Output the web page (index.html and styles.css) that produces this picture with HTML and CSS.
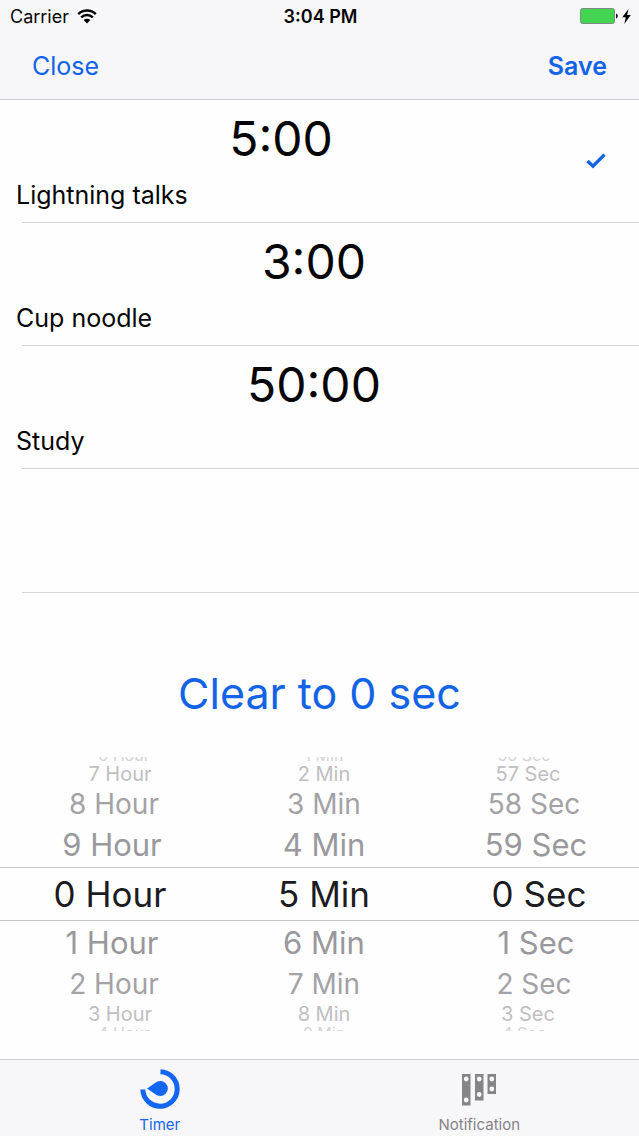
FILE: index.html
```html
<!DOCTYPE html>
<html lang="en">
<head>
<meta charset="utf-8">
<meta name="viewport" content="width=device-width, initial-scale=1">
<title>Timer</title>
<link rel="stylesheet" href="styles.css">
</head>
<body>
<header class="header">
  <div class="status">
    <div class="status-side">
      <span>Carrier</span>
      <svg class="wifi" viewBox="0 0 20 15" aria-hidden="true">
        <path d="M1.2 5.2a12.6 12.6 0 0 1 17.6 0M4.2 8.3a8.3 8.3 0 0 1 11.6 0" fill="none" stroke="currentColor" stroke-width="2.5"/>
        <path d="M6.6 11a4.9 4.9 0 0 1 6.8 0L10 14.4z" fill="currentColor"/>
      </svg>
    </div>
    <time class="clock">3:04 PM</time>
    <div class="status-side status-end">
      <svg class="battery" viewBox="0 0 38 16" aria-hidden="true">
        <rect x=".5" y=".5" width="34" height="15" rx="2" fill="#43d551" stroke="#7d8a80"/>
        <path d="M36 5.5q1.8.6 1.8 2.5T36 10.5z" fill="#111"/>
      </svg>
      <svg class="bolt" viewBox="0 0 9 15" aria-hidden="true">
        <path d="M6.5 0 .3 8.3h3.5L2.3 15 8.8 6H5.2z" fill="#000"/>
      </svg>
    </div>
  </div>
  <nav class="nav">
    <button class="nav-button" type="button">Close</button>
    <button class="nav-button nav-save" type="button">Save</button>
  </nav>
</header>
<main class="main">
  <ul class="presets">
    <li class="preset preset-selected">
      <div class="preset-text"><span class="preset-time">5:00</span><span class="preset-name">Lightning talks</span></div>
      <svg class="check" viewBox="0 0 20 16" role="img" aria-label="Selected"><path d="M1.5 8 7 13.2 18.5 1.6" fill="none" stroke="currentColor" stroke-width="3.4"/></svg>
    </li>
    <li class="preset"><div class="preset-text"><span class="preset-time">3:00</span><span class="preset-name">Cup noodle</span></div></li>
    <li class="preset"><div class="preset-text"><span class="preset-time">50:00</span><span class="preset-name">Study</span></div></li>
    <li class="preset"></li>
  </ul>
  <button class="clear" type="button">Clear to 0 sec</button>
  <div class="picker">
    <ul class="wheel wheel-hour" role="listbox" aria-label="Hours">
      <li class="far above" role="option">6 Hour</li>
      <li class="third" role="option">7 Hour</li>
      <li class="second" role="option">8 Hour</li>
      <li class="first" role="option">9 Hour</li>
      <li class="current" role="option" aria-selected="true">0 Hour</li>
      <li class="first" role="option">1 Hour</li>
      <li class="second" role="option">2 Hour</li>
      <li class="third" role="option">3 Hour</li>
      <li class="far" role="option">4 Hour</li>
    </ul>
    <ul class="wheel" role="listbox" aria-label="Minutes">
      <li class="far above" role="option">1 Min</li>
      <li class="third" role="option">2 Min</li>
      <li class="second" role="option">3 Min</li>
      <li class="first" role="option">4 Min</li>
      <li class="current" role="option" aria-selected="true">5 Min</li>
      <li class="first" role="option">6 Min</li>
      <li class="second" role="option">7 Min</li>
      <li class="third" role="option">8 Min</li>
      <li class="far" role="option">9 Min</li>
    </ul>
    <ul class="wheel wheel-sec" role="listbox" aria-label="Seconds">
      <li class="far above" role="option">56 Sec</li>
      <li class="third" role="option">57 Sec</li>
      <li class="second" role="option">58 Sec</li>
      <li class="first" role="option">59 Sec</li>
      <li class="current" role="option" aria-selected="true">0 Sec</li>
      <li class="first" role="option">1 Sec</li>
      <li class="second" role="option">2 Sec</li>
      <li class="third" role="option">3 Sec</li>
      <li class="far" role="option">4 Sec</li>
    </ul>
  </div>
</main>
<nav class="tabs">
  <button class="tab tab-active" type="button">
    <svg class="tab-icon" viewBox="0 0 40 40" aria-hidden="true">
      <path d="M20.5 2.8A17.2 17.2 0 1 1 2.8 20.5" fill="none" stroke="currentColor" stroke-width="5"/>
      <path d="M7 19.500 15 14A7.600 7.600 0 1 1 15 25z" fill="currentColor"/>
    </svg>
    <span>Timer</span>
  </button>
  <button class="tab" type="button">
    <svg class="tab-icon" viewBox="0 0 40 40" aria-hidden="true">
      <path d="M3 5h8.5v31.5H3zM16 5h8.500v26.500H16zM28.500 5H37v20h-8.500z" fill="currentColor"/>
      <g fill="#f7f6f9"><circle cx="7.200" cy="10" r="2.400"/><circle cx="7.200" cy="31" r="2.400"/><circle cx="20.200" cy="10" r="2.400"/><circle cx="20.200" cy="25.500" r="2.400"/><circle cx="32.800" cy="10" r="2.400"/><circle cx="32.800" cy="20" r="2.400"/></g>
    </svg>
    <span>Notification</span>
  </button>
</nav>
</body>
</html>
```
FILE: styles.css
```css
* { box-sizing: border-box; }
body {
  margin: 0;
  min-height: 100vh;
  display: flex;
  flex-direction: column;
  background: #fefefe;
  color: #050505;
  font-family: Inter, "Liberation Sans", sans-serif;
}
button {
  border: 0;
  padding: 0;
  background: none;
  color: #1263e6;
  font: inherit;
  cursor: pointer;
}
ul { margin: 0; padding: 0; list-style: none; }
svg { display: block; flex: none; }

.header { background: #f7f6f9; border-bottom: 1px solid #cbcacd; }
.status {
  display: grid;
  grid-template-columns: 1fr auto 1fr;
  align-items: center;
  height: 32px;
  padding: 0 8px 0 10px;
  font-size: 18px;
}
.status-side { display: flex; align-items: center; gap: 8px; }
.status-end { justify-content: flex-end; gap: 4px; }
.clock { font-weight: 600; }
.wifi { width: 20px; height: 15px; }
.battery { width: 38px; height: 16px; }
.bolt { width: 9px; height: 15px; }
.nav {
  display: flex;
  justify-content: space-between;
  align-items: center;
  height: 67px;
  padding: 0 32px;
}
.nav-button { font-size: 25px; line-height: 32px; }
.nav-save { font-weight: 600; }

.main { flex: 1; display: flex; flex-direction: column; }
.presets { padding-left: 22px; }
.preset {
  display: flex;
  align-items: center;
  gap: 40px;
  min-height: 123px;
  padding-right: 27px;
  border-bottom: 1px solid #d6d5d8;
}
.preset:last-child { min-height: 124px; }
.preset-selected { padding-right: 33px; }
.preset-text {
  flex: 1;
  display: flex;
  flex-direction: column;
  gap: 8px;
  margin-left: -6px;
}
.preset-time { text-align: center; font-size: 48px; line-height: 60px; }
.preset-name { font-size: 25px; line-height: 36px; }
.check { width: 20px; height: 16px; color: #1263e6; }

.clear { align-self: center; margin-top: 70px; font-size: 43px; line-height: 60px; }

.picker {
  position: relative;
  display: grid;
  grid-template-columns: repeat(3, 1fr);
  column-gap: 6px;
  margin: 34px 0 28px;
  padding-left: 9px;
}
.picker::before {
  content: "";
  position: absolute;
  inset: 110px 0;
  border: solid #c6c5c8;
  border-width: 1px 0;
}
.wheel li {
  display: flex;
  justify-content: center;
  align-items: center;
  white-space: nowrap;
}
.wheel .current { height: 54px; font-size: 35px; color: #1c1b1f; }
.wheel .first { height: 44px; font-size: 31px; line-height: 42px; color: #99989c; }
.wheel .second { height: 38px; font-size: 28px; color: #a3a2a6; }
.wheel .third { height: 22px; font-size: 20px; line-height: 22px; color: #bfbec2; }
.wheel .far { height: 6px; overflow: hidden; font-size: 16px; line-height: 16px; color: #d3d2d6; align-items: flex-start; }
.wheel .above { align-items: flex-end; }
.wheel-hour .current { padding-right: 4px; }
.wheel-hour .second { padding-left: 4px; }
.wheel-hour .third { padding-left: 16px; }
.wheel-hour .far { padding-left: 24px; }
.wheel-sec .current { padding-left: 6px; }
.wheel-sec .second { padding-right: 4px; }
.wheel-sec .third { padding-right: 16px; }
.wheel-sec .far { padding-right: 24px; }

.tabs {
  display: grid;
  grid-template-columns: 1fr 1fr;
  background: #f7f6f9;
  border-top: 1px solid #cbcacd;
}
.tab {
  display: flex;
  flex-direction: column;
  align-items: center;
  gap: 6px;
  padding: 9px 0 1px;
  color: #858489;
  font-size: 15px;
  line-height: 20px;
}
.tab-active { color: #1266f1; }
.tab-icon { width: 40px; height: 40px; }
```
